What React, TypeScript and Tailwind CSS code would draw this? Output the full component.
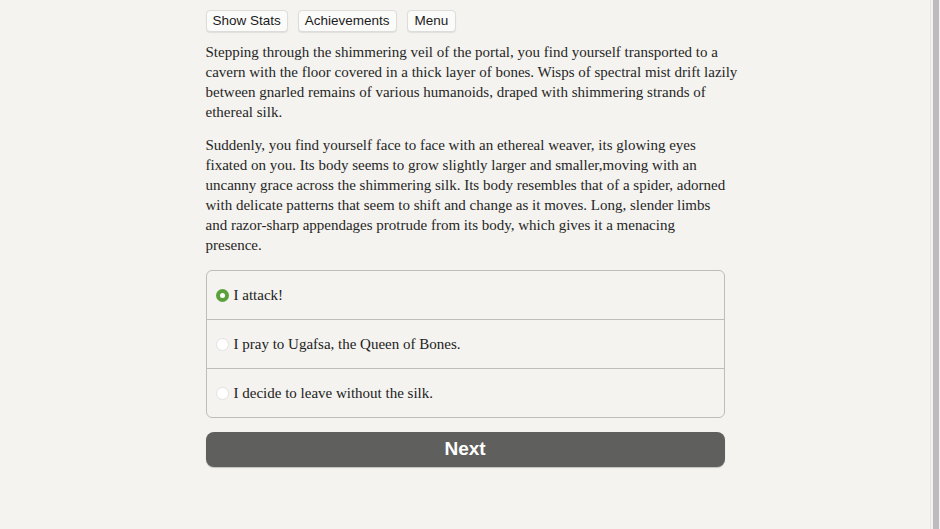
import { useState } from 'react';

const choices = [
  'I attack!',
  'I pray to Ugafsa, the Queen of Bones.',
  'I decide to leave without the silk.',
];

export default function App() {
  const [selected, setSelected] = useState(0);

  return (
    <div className="flex h-screen bg-[#f4f3ef] overflow-hidden">
      <main className="flex-1 flex justify-center">
        <div className="w-[519px] pt-[10px]">
          <div className="flex gap-[10px] font-['Liberation_Sans',sans-serif] text-[13.5px] text-[#1c1c1c]">
            <button className="h-[22px] px-[6px] bg-[#fbfbfa] border border-[#dcdcda] rounded-[4px] shadow-[0_1px_1px_rgba(0,0,0,0.08)] leading-none">
              Show Stats
            </button>
            <button className="h-[22px] px-[6px] bg-[#fbfbfa] border border-[#dcdcda] rounded-[4px] shadow-[0_1px_1px_rgba(0,0,0,0.08)] leading-none">
              Achievements
            </button>
            <button className="h-[22px] px-[7px] bg-[#fbfbfa] border border-[#dcdcda] rounded-[4px] shadow-[0_1px_1px_rgba(0,0,0,0.08)] leading-none">
              Menu
            </button>
          </div>

          <div className="mt-[10px] font-['Liberation_Serif',serif] text-[15px] leading-[20px] text-[#262626] whitespace-nowrap">
            <p>
              Stepping through the shimmering veil of the portal, you find yourself transported to a<br />
              cavern with the floor covered in a thick layer of bones. Wisps of spectral mist drift lazily<br />
              between gnarled remains of various humanoids, draped with shimmering strands of<br />
              ethereal silk.
            </p>
            <p className="mt-[13px]">
              Suddenly, you find yourself face to face with an ethereal weaver, its glowing eyes<br />
              fixated on you. Its body seems to grow slightly larger and smaller,moving with an<br />
              uncanny grace across the shimmering silk. Its body resembles that of a spider, adorned<br />
              with delicate patterns that seem to shift and change as it moves. Long, slender limbs<br />
              and razor-sharp appendages protrude from its body, which gives it a menacing<br />
              presence.
            </p>
          </div>

          <div className="mt-[15px] border border-[#bdbdbb] rounded-[6px] overflow-hidden">
            {choices.map((c, i) => (
              <label
                key={c}
                onClick={() => setSelected(i)}
                className={`flex items-center h-[48px] box-content pl-[9px] gap-[5px] cursor-pointer ${
                  i > 0 ? 'border-t border-[#bdbdbb]' : ''
                }`}
              >
                {selected === i ? (
                  <span className="w-[13px] h-[13px] rounded-full bg-[#5aa13c] flex items-center justify-center">
                    <span className="w-[5px] h-[5px] rounded-full bg-white" />
                  </span>
                ) : (
                  <span className="w-[13px] h-[13px] rounded-full bg-white border border-[#e2e2e0]" />
                )}
                <span className="font-['Liberation_Serif',serif] text-[15px] text-[#222]">{c}</span>
              </label>
            ))}
          </div>

          <button className="mt-[14px] w-full h-[35px] rounded-[8px] bg-[#5f5f5e] text-white font-['Liberation_Sans',sans-serif] font-bold text-[19px] shadow-[0_1px_1px_rgba(0,0,0,0.2)]">
            Next
          </button>
        </div>
      </main>
      <aside className="w-[10px] flex border-l border-[#e4e4e2]">
        <div className="w-[2px]" />
        <div className="w-[6px] bg-[#bcbcbf]" />
      </aside>
    </div>
  );
}
